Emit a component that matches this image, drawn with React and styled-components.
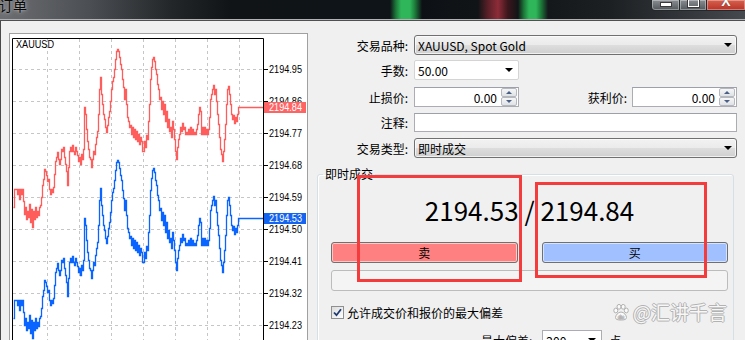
import React from "react";
import styled, { createGlobalStyle } from "styled-components";

const GlobalStyle = createGlobalStyle`
  html, body {
    margin: 0;
    padding: 0;
    background: #f0f0f0;
    overflow: hidden;
  }
  body {
    font-family: "Noto Sans CJK SC", "Noto Sans", sans-serif;
    font-size: 12px;
    color: #000;
  }
`;

const Window = styled.div`
  position: relative;
  width: 745px;
  height: 340px;
  overflow: hidden;
  background: #f0f0f0;
`;

const TitleBar = styled.div`
  height: 19px;
  display: flex;
  justify-content: space-between;
  align-items: flex-start;
  overflow: hidden;
  border-bottom: 1px solid #b0b2b4;
  background: linear-gradient(
    90deg,
    #6c6e72 0px,
    #4b4e52 90px,
    #24272a 170px,
    #101417 230px,
    #0e1418 390px,
    #1d7a3a 396px,
    #2fb55a 401px,
    #2fb55a 410px,
    #1d7a3a 415px,
    #0d1115 422px,
    #111417 478px,
    #5a2028 488px,
    #8d2c38 498px,
    #3a161c 508px,
    #121518 518px,
    #1d7a3a 524px,
    #2fb55a 529px,
    #2fb55a 536px,
    #1d7a3a 541px,
    #14181b 548px,
    #1c2023 610px,
    #34383c 690px,
    #464a4e 745px
  );
`;

const Title = styled.div`
  margin: -4px 0 0 -1px;
  font-size: 14px;
  line-height: 19px;
  color: #080808;
  text-shadow: 0 0 5px rgba(255, 255, 255, 0.55), 0 0 2px rgba(255, 255, 255, 0.4);
`;

const Controls = styled.div`
  display: flex;
  margin-right: -1px;
`;

const CtrlButton = styled.div`
  width: ${(p) => p.$w}px;
  height: 11px;
  box-sizing: border-box;
  display: flex;
  justify-content: center;
  align-items: flex-start;
  overflow: hidden;
  border: 1px solid #25282b;
  border-top: none;
  border-left-width: ${(p) => (p.$first ? 1 : 0)}px;
  border-radius: ${(p) => (p.$first ? "0 0 0 4px" : "0")};
  box-shadow: inset 0 0 0 1px rgba(255, 255, 255, 0.35);
  background: ${(p) =>
    p.$close
      ? "linear-gradient(#d8604e, #b63428)"
      : "linear-gradient(#8a8e93, #52575c)"};
  color: #fff;
`;

const MinGlyph = styled.span`
  width: 10px;
  height: 3px;
  margin-top: 2px;
  background: #fff;
  border: 1px solid #3a3a3a;
`;

const MaxGlyph = styled.span`
  width: 9px;
  height: 6px;
  margin-top: -2px;
  border: 1px solid #fff;
  border-top-width: 2px;
  box-shadow: 0 0 0 1px #3a3a3a;
`;

const CloseGlyph = styled.span`
  font-family: "Liberation Sans", Arial, sans-serif;
  font-weight: bold;
  font-size: 14px;
  line-height: 14px;
  margin-top: -6px;
  text-shadow: 0 0 1px #4a1010;
`;

const Body = styled.div`
  display: flex;
  align-items: flex-start;
  border-top: 1px solid #505050;
  border-left: 1px solid #4a4a4a;
  height: 330px;
`;

const ChartPanel = styled.div`
  margin: 12px 0 0 8px;
  width: 299px;
  height: 320px;
  box-sizing: border-box;
  border: 1px solid #a0a0a0;
  background: #fff;
  flex: none;
`;

const Form = styled.div`
  margin-left: 8px;
  padding-top: 14px;
  width: 421px;
  flex: none;
`;

const Row = styled.div`
  display: flex;
  align-items: center;
  height: ${(p) => p.$h || 20}px;
  margin-top: ${(p) => p.$mt || 0}px;
`;

const Label = styled.label`
  width: 92px;
  margin-right: 6px;
  flex: none;
  text-align: right;
  white-space: nowrap;
`;

const SideLabel = styled.label`
  flex: 1;
  margin-right: 5px;
  text-align: right;
  white-space: nowrap;
`;

const Select = styled.div`
  width: 323px;
  height: 20px;
  box-sizing: border-box;
  display: flex;
  align-items: center;
  justify-content: space-between;
  padding: 0 4px 0 3px;
  border: 1px solid #707070;
  border-radius: 3px;
  box-shadow: inset 0 0 0 1px rgba(255, 255, 255, 0.7);
  background: linear-gradient(#f2f2f2, #ebebeb 48%, #dddddd 52%, #cfcfcf);
`;

const Combo = styled.div`
  width: 105px;
  height: 20px;
  box-sizing: border-box;
  display: flex;
  align-items: center;
  justify-content: space-between;
  padding: 0 5px 0 3px;
  border: 1px solid #d4d4d4;
  border-radius: 2px;
  background: #fff;
`;

const Arrow = styled.span`
  width: 0;
  height: 0;
  border-left: 4px solid transparent;
  border-right: 4px solid transparent;
  border-top: 4px solid #000;
`;

const TextBox = styled.div`
  width: ${(p) => p.$w}px;
  height: ${(p) => p.$h || 20}px;
  box-sizing: border-box;
  display: flex;
  align-items: center;
  border: 1px solid #abadb3;
  border-top-color: #9da0aa;
  background: #fff;
`;

const SpinValue = styled.span`
  flex: 1;
  text-align: right;
  padding-right: 4px;
`;

const SpinButtons = styled.div`
  display: flex;
  flex-direction: column;
  width: 16px;
  height: 18px;
  margin-right: 1px;
`;

const SpinButton = styled.div`
  flex: 1;
  display: flex;
  align-items: center;
  justify-content: center;
  border: 1px solid #b5b8bf;
  border-radius: 2px;
  background: linear-gradient(#f6f6f6, #dfe2e6);
`;

const SpinTri = styled.span`
  width: 0;
  height: 0;
  border-left: 3px solid transparent;
  border-right: 3px solid transparent;
  ${(p) => (p.$up ? "border-bottom" : "border-top")}: 3px solid #4a5f86;
`;

const Group = styled.fieldset`
  margin: 9px 0 0 1px;
  padding: 0;
  width: 417px;
  height: 220px;
  box-sizing: border-box;
  min-width: 0;
  border: 1px solid #d5dfe5;
  border-radius: 3px;
  box-shadow: inset 1px 1px 0 #fff;
`;

const Legend = styled.legend`
  margin-left: 5px;
  padding: 0 2px;
  font-size: 12px;
  line-height: 14px;
`;

const GroupBody = styled.div`
  padding: 14px 5px 0 13px;
`;

const Prices = styled.div`
  height: 30px;
  font-size: 26px;
  line-height: 30px;
  text-align: center;
  white-space: nowrap;
`;

const Buttons = styled.div`
  display: grid;
  grid-template-columns: 1fr 1fr;
  column-gap: 24px;
  margin-top: 17px;
`;

const TradeButton = styled.div`
  height: 21px;
  box-sizing: border-box;
  display: flex;
  align-items: center;
  justify-content: center;
  border: 1px solid #707070;
  border-radius: 3px;
  box-shadow: inset 0 0 0 1px rgba(255, 255, 255, 0.55);
  background: ${(p) => (p.$side === "sell" ? "#ff8080" : "#a0c0ff")};
  font-size: 12px;
`;

const Progress = styled.div`
  margin-top: 7px;
  height: 21px;
  box-sizing: border-box;
  border: 1px solid #bcbcbc;
  border-radius: 3px;
  background: #f4f4f4;
`;

const CheckRow = styled.div`
  display: flex;
  align-items: center;
  height: 13px;
  margin-top: 15px;
`;

const CheckBox = styled.span`
  width: 13px;
  height: 13px;
  box-sizing: border-box;
  border: 1px solid #8e8f8f;
  background: linear-gradient(135deg, #dcdcdc, #fefefe);
  display: flex;
  align-items: center;
  justify-content: center;
  margin-right: 3px;
`;

const DevRow = styled.div`
  display: flex;
  align-items: center;
  height: 20px;
  margin: 11px 0 0 150px;
`;

const DevBox = styled.div`
  width: 60px;
  height: 20px;
  box-sizing: border-box;
  margin-left: 10px;
  display: flex;
  align-items: center;
  justify-content: space-between;
  padding: 0 5px 0 3px;
  border: 1px solid #abadb3;
  background: #fff;
`;

const Unit = styled.span`
  margin-left: 7px;
`;

const Mark = styled.div`
  position: absolute;
  left: ${(p) => p.$x}px;
  top: ${(p) => p.$y}px;
  width: ${(p) => p.$w}px;
  height: ${(p) => p.$h}px;
  box-sizing: border-box;
  border: 3px solid #f43c3c;
`;

const Watermark = styled.div`
  position: absolute;
  left: 613px;
  top: 300px;
  display: flex;
  align-items: center;
  gap: 4px;
  font-size: 19px;
  line-height: 24px;
  color: rgba(255, 255, 255, 0.92);
  text-shadow: 1px 0 0 #b2b2b2, -1px 0 0 #b2b2b2, 0 1px 0 #b2b2b2, 0 -1px 0 #b2b2b2;
`;

const BLUE =
  "13,318 14,300 16,300 17,305 18,300 19,310 20,300 21,305 22,300 23,312 24,325 25,318 26,330 27,322 28,328 29,315 30,333 31,320 32,338 33,322 34,330 35,318 36,328 37,322 38,326 39,318 40,316 41,308 42,296 43,290 44,280 45,282 46,286 47,292 48,290 49,300 50,305 51,300 52,303 53,298 54,285 55,272 56,268 57,263 58,270 59,275 60,270 61,260 62,262 63,258 64,268 65,275 66,282 67,296 68,278 69,262 70,258 71,262 72,256 73,262 74,265 75,258 76,262 77,266 78,272 79,268 80,275 81,265 82,270 83,260 84,218 85,225 86,240 87,252 88,260 89,268 90,270 91,278 92,270 93,262 94,265 95,255 96,248 97,242 98,225 99,200 100,188 101,205 102,215 103,225 104,230 105,238 106,243 107,236 108,228 109,222 110,212 111,200 112,192 113,188 114,180 115,170 116,162 117,160 118,162 119,168 120,175 121,180 122,190 123,198 124,210 125,200 126,215 127,228 128,232 129,238 130,236 131,245 132,238 133,248 134,240 135,250 136,242 137,252 138,245 139,255 140,248 141,252 142,262 143,262 144,252 145,258 146,246 147,250 148,232 149,215 150,190 151,178 152,170 153,168 154,172 155,180 156,185 157,195 158,200 159,210 160,208 161,220 162,212 163,225 164,215 165,232 166,222 167,238 168,230 169,242 170,238 171,248 172,232 173,240 174,250 175,262 176,270 177,258 178,250 179,245 180,238 181,242 182,234 183,240 184,238 185,245 186,243 187,245 188,240 189,245 190,238 191,245 192,240 193,245 194,243 195,245 196,240 197,235 198,225 199,218 200,222 201,245 202,238 203,245 204,238 205,245 206,240 207,245 208,240 209,228 210,210 211,205 212,200 213,196 214,205 215,200 216,212 217,225 218,235 219,248 220,260 221,265 222,272 223,262 224,250 225,235 226,215 227,200 228,197 229,205 230,215 231,225 232,230 233,226 234,234 235,228 236,232 237,225 238,218 263,218";

// MT4 draws the tick line as small steps, so turn the points into an H/V path
function stepPath(points, dy) {
  const pts = points.split(" ").map((p) => p.split(",").map(Number));
  return pts
    .map(([x, y], i) => (i === 0 ? `M${x + 0.5} ${y - dy + 0.5}` : `H${x + 0.5} V${y - dy + 0.5}`))
    .join(" ");
}

const gridX = [47, 79, 111, 143, 175, 207, 239];
const levels = ["2194.95", "2194.86", "2194.77", "2194.68", "2194.59", "2194.50", "2194.41", "2194.32", "2194.23"];

function PriceChart() {
  return (
    <svg width="297" height="318" style={{ display: "block" }}>
      <defs>
        <clipPath id="plot">
          <rect x="13" y="39" width="250" height="320" />
        </clipPath>
      </defs>
      <g transform="translate(-10 -34)" fontFamily="'Liberation Sans', Arial, sans-serif">
        {gridX.map((x) => (
          <line key={x} x1={x + 0.5} y1="39" x2={x + 0.5} y2="360" stroke="#c6c6c6" strokeDasharray="3 3" />
        ))}
        {levels.map((v, i) => (
          <line key={v} x1="13" y1={69.5 + i * 32} x2="263" y2={69.5 + i * 32} stroke="#c6c6c6" strokeDasharray="3 3" />
        ))}
        <path d="M12.5 360 V38.5 H263.5 V360" fill="none" stroke="#000" />
        {levels.map((v, i) => (
          <g key={v}>
            <line x1="264" y1={69.5 + i * 32} x2="268" y2={69.5 + i * 32} stroke="#000" />
            <text x="269" y={73 + i * 32} fontSize="11.5" textLength="33" lengthAdjust="spacingAndGlyphs" fill="#000">
              {v}
            </text>
          </g>
        ))}
        <text x="16" y="48" fontSize="10" textLength="38" lengthAdjust="spacingAndGlyphs" fill="#000">
          XAUUSD
        </text>
        <g clipPath="url(#plot)" fill="none" strokeWidth="1.3">
          <path d={stepPath(BLUE, 111)} stroke="#ff5c5c" />
          <path d={stepPath(BLUE, 0)} stroke="#0a64ff" />
        </g>
        <rect x="264" y="102" width="42" height="11" fill="#ff6464" />
        <text x="269" y="111" fontSize="11.5" textLength="33" lengthAdjust="spacingAndGlyphs" fill="#fff">
          2194.84
        </text>
        <rect x="264" y="213" width="42" height="11" fill="#1464f0" />
        <text x="269" y="222" fontSize="11.5" textLength="33" lengthAdjust="spacingAndGlyphs" fill="#fff">
          2194.53
        </text>
      </g>
    </svg>
  );
}

function Spin({ value }) {
  return (
    <TextBox $w={105}>
      <SpinValue>{value}</SpinValue>
      <SpinButtons>
        <SpinButton>
          <SpinTri $up />
        </SpinButton>
        <SpinButton>
          <SpinTri />
        </SpinButton>
      </SpinButtons>
    </TextBox>
  );
}

function Paw() {
  return (
    <svg width="16" height="17" viewBox="0 0 16 17">
      <g fill="#fafafa" stroke="#b0b0b0" strokeWidth="1">
        <ellipse cx="2.8" cy="6.5" rx="2" ry="2.4" />
        <ellipse cx="6" cy="2.8" rx="2" ry="2.4" />
        <ellipse cx="10.2" cy="2.8" rx="2" ry="2.4" />
        <ellipse cx="13.3" cy="6.5" rx="2" ry="2.4" />
        <path d="M8 8 C5 8 2.5 11.5 2.5 13.5 C2.5 15.5 4.5 16 8 16 C11.5 16 13.5 15.5 13.5 13.5 C13.5 11.5 11 8 8 8 Z" />
      </g>
      <text x="8" y="14.5" fontSize="5" textAnchor="middle" fill="#b0b0b0" fontFamily="'Liberation Sans', sans-serif">
        du
      </text>
    </svg>
  );
}

export default function App() {
  return (
    <Window>
      <GlobalStyle />
      <TitleBar>
        <Title>订单</Title>
        <Controls>
          <CtrlButton $w={29} $first>
            <MinGlyph />
          </CtrlButton>
          <CtrlButton $w={27}>
            <MaxGlyph />
          </CtrlButton>
          <CtrlButton $w={39} $close>
            <CloseGlyph>X</CloseGlyph>
          </CtrlButton>
        </Controls>
      </TitleBar>
      <Body>
        <ChartPanel>
          <PriceChart />
        </ChartPanel>
        <Form>
          <Row>
            <Label>交易品种:</Label>
            <Select>
              <span>XAUUSD, Spot Gold</span>
              <Arrow />
            </Select>
          </Row>
          <Row $mt={5}>
            <Label>手数:</Label>
            <Combo>
              <span>50.00</span>
              <Arrow />
            </Combo>
          </Row>
          <Row $mt={7}>
            <Label>止损价:</Label>
            <Spin value="0.00" />
            <SideLabel>获利价:</SideLabel>
            <Spin value="0.00" />
          </Row>
          <Row $mt={6} $h={19}>
            <Label>注释:</Label>
            <TextBox $w={323} $h={19} />
          </Row>
          <Row $mt={6}>
            <Label>交易类型:</Label>
            <Select>
              <span>即时成交</span>
              <Arrow />
            </Select>
          </Row>
          <Group>
            <Legend>即时成交</Legend>
            <GroupBody>
              <Prices>2194.53 / 2194.84</Prices>
              <Buttons>
                <TradeButton $side="sell">卖</TradeButton>
                <TradeButton $side="buy">买</TradeButton>
              </Buttons>
              <Progress />
              <CheckRow>
                <CheckBox>
                  <svg width="9" height="9" viewBox="0 0 9 9">
                    <path d="M1 4.5 L3.5 7.2 L8 1.2" fill="none" stroke="#1f3a72" strokeWidth="1.8" />
                  </svg>
                </CheckBox>
                <span>允许成交价和报价的最大偏差</span>
              </CheckRow>
              <DevRow>
                <span>最大偏差:</span>
                <DevBox>
                  <span>200</span>
                  <Arrow />
                </DevBox>
                <Unit>点</Unit>
              </DevRow>
            </GroupBody>
          </Group>
        </Form>
      </Body>
      <Mark $x={357} $y={175} $w={165} $h={107} />
      <Mark $x={535} $y={182} $w={172} $h={96} />
      <Watermark>
        <Paw />
        <span>@汇讲千言</span>
      </Watermark>
    </Window>
  );
}
